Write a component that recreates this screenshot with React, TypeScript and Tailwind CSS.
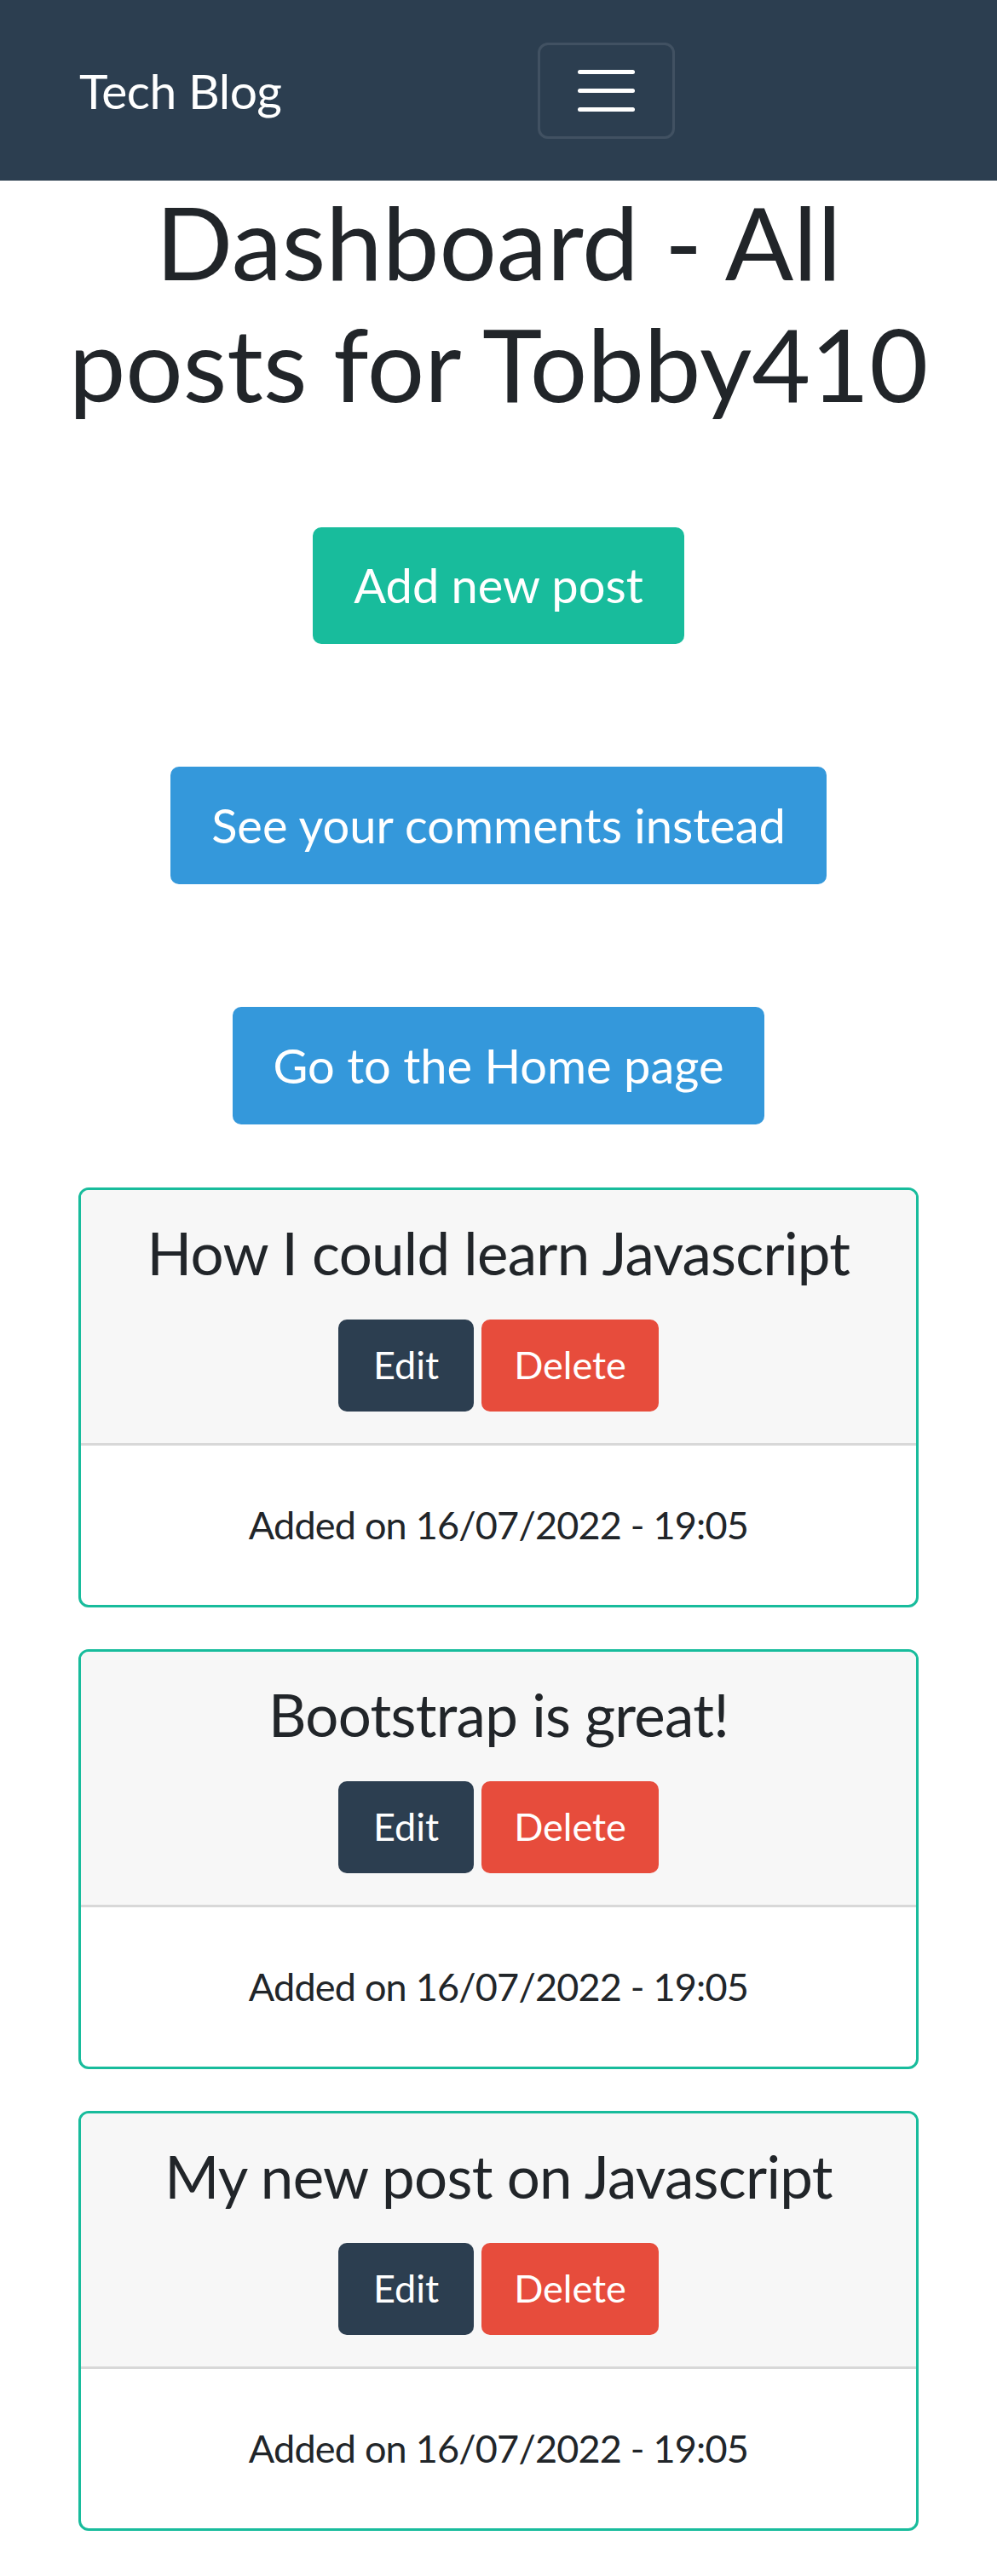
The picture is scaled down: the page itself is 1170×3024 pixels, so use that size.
import React from "react";

const posts = [
  { title: "How I could learn Javascript", date: "16/07/2022 - 19:05" },
  { title: "Bootstrap is great!", date: "16/07/2022 - 19:05" },
  { title: "My new post on Javascript", date: "16/07/2022 - 19:05" },
];

function NavBar() {
  return (
    <nav className="flex h-[212px] items-center bg-[#2c3e50] pl-[93px]">
      <span className="w-[538px] text-[57px] leading-none tracking-[-0.5px] text-white">Tech Blog</span>
      <button
        aria-label="Toggle navigation"
        className="flex h-[113px] w-[161px] flex-col items-center justify-center gap-[17px] rounded-[12px] border-[3px] border-white/10"
      >
        <span className="h-[5px] w-[67px] rounded-full bg-white" />
        <span className="h-[5px] w-[67px] rounded-full bg-white" />
        <span className="h-[5px] w-[67px] rounded-full bg-white" />
      </button>
    </nav>
  );
}

function PostCard({ title, date }: { title: string; date: string }) {
  return (
    <div className="overflow-hidden rounded-[12px] border-[3px] border-[#18bc9c]">
      <div className="flex flex-col items-center border-b-[3px] border-[#d8d8d8] bg-[#f7f7f7] pt-[32px] pb-[37px]">
        <h3 className="text-[69px] leading-[83px] tracking-[-0.7px] text-[#212529]">{title}</h3>
        <div className="mt-[37px] flex gap-[9px]">
          <button className="h-[108px] w-[159px] rounded-[10px] bg-[#2c3e50] text-[45px] text-white">Edit</button>
          <button className="h-[108px] w-[208px] rounded-[10px] bg-[#e74c3c] text-[45px] text-white">Delete</button>
        </div>
      </div>
      <p className="py-[60px] text-center text-[45px] leading-[67px] tracking-[-0.8px] text-[#212529]">Added on {date}</p>
    </div>
  );
}

export default function App() {
  return (
    <div className="min-h-[3024px] bg-white font-['Lato','Liberation_Sans',sans-serif]">
      <NavBar />
      <h1 className="px-[70px] text-center text-[119px] leading-[1.2] font-normal text-[#212529]">
        Dashboard - All posts for Tobby410
      </h1>
      <div className="mt-[121px] flex flex-col items-center gap-[144px]">
        <button className="h-[137px] rounded-[10px] bg-[#18bc9c] px-[48px] text-[56px] text-white">Add new post</button>
        <button className="h-[138px] rounded-[10px] bg-[#3498db] px-[48px] text-[56px] text-white">See your comments instead</button>
        <button className="h-[138px] rounded-[10px] bg-[#3498db] px-[48px] text-[56px] text-white">Go to the Home page</button>
      </div>
      <div className="mx-[92px] mt-[74px] flex flex-col gap-[49px] pb-[49px]">
        {posts.map((p) => (
          <PostCard key={p.title} title={p.title} date={p.date} />
        ))}
      </div>
    </div>
  );
}
